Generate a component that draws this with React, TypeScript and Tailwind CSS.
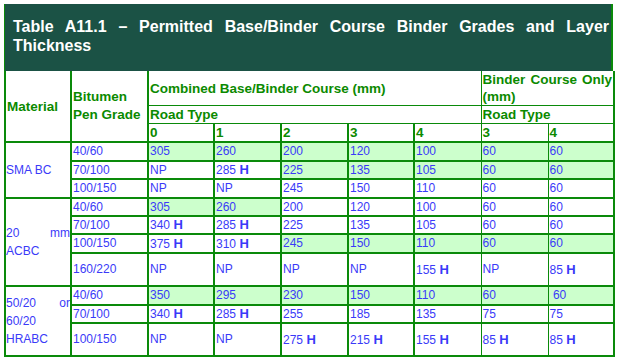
import React from 'react';

type Cell = { v: string; g?: boolean };
type Row = { grade: string; h: string; cells: Cell[]; mat?: { text: string; span: number; justify?: boolean } };

const BORDER_L: Record<number, string> = { 0: 'border-l-0', 1: 'border-l', 2: 'border-l-2' };
const BORDER_R: Record<number, string> = { 0: 'border-r-0', 1: 'border-r', 2: 'border-r-2' };
const BORDER_T: Record<number, string> = { 0: 'border-t-0', 1: 'border-t', 2: 'border-t-2' };
const BORDER_B: Record<number, string> = { 0: 'border-b-0', 1: 'border-b', 2: 'border-b-2' };

function edges(t: number, r: number, b: number, l: number) {
  return `${BORDER_T[t]} ${BORDER_R[r]} ${BORDER_B[b]} ${BORDER_L[l]} border-solid border-[#0a8a0a]`;
}

// left/right widths per column: material, bitumen, road types 0-4, binder 3-4
const colL = [2, 2, 2, 2, 2, 2, 2, 1, 1];
const colR = [2, 2, 2, 2, 2, 2, 1, 1, 2];

const mk = (vals: string[], green: number[]): Cell[] => vals.map((v, i) => ({ v, g: green.includes(i) }));
const all = [0, 1, 2, 3, 4, 5, 6];

const rows: Row[] = [
  { grade: '40/60', h: 'h-[19px]', mat: { text: 'SMA BC', span: 3 }, cells: mk(['305', '260', '200', '120', '100', '60', '60'], all) },
  { grade: '70/100', h: 'h-[18px]', cells: mk(['NP', '285 H', '225', '135', '105', '60', '60'], [2, 3, 4, 5, 6]) },
  { grade: '100/150', h: 'h-[19px]', cells: mk(['NP', 'NP', '245', '150', '110', '60', '60'], []) },
  { grade: '40/60', h: 'h-[18px]', mat: { text: '20 mm ACBC', span: 4, justify: true }, cells: mk(['305', '260', '200', '120', '100', '60', '60'], [0, 1]) },
  { grade: '70/100', h: 'h-[18px]', cells: mk(['340 H', '285 H', '225', '135', '105', '60', '60'], []) },
  { grade: '100/150', h: 'h-[19px]', cells: mk(['375 H', '310 H', '245', '150', '110', '60', '60'], [2, 3, 4, 5, 6]) },
  { grade: '160/220', h: 'h-[33px]', cells: mk(['NP', 'NP', 'NP', 'NP', '155 H', 'NP', '85 H'], []) },
  { grade: '40/60', h: 'h-[19px]', mat: { text: '50/20 or 60/20 HRABC', span: 3, justify: true }, cells: mk(['350', '295', '230', '150', '110', '60', '\u00a060'], all) },
  { grade: '70/100', h: 'h-[18px]', cells: mk(['340 H', '285 H', '255', '185', '135', '75', '75'], []) },
  { grade: '100/150', h: 'h-[33px]', cells: mk(['NP', 'NP', '275 H', '215 H', '155 H', '85 H', '85 H'], []) },
];

function Value({ v }: { v: string }) {
  if (v.endsWith(' H')) {
    return (
      <>
        {v.slice(0, -2)} <b className="text-[13px]">H</b>
      </>
    );
  }
  return <>{v}</>;
}

export default function App() {
  const head = 'text-[13.5px] font-bold text-[#0b8a00] leading-[17px] px-[1px] py-0';
  const data = 'text-[12px] text-[#3a3af8] align-middle';

  return (
    <div className="w-[620px] h-[360px] bg-white pt-[4px] pl-[4px]" style={{ fontFamily: '"Liberation Sans", Arial, sans-serif' }}>
      <div className="w-[609px]">
        <div className="bg-[#1b5245] border-r-2 border-l border-[#0a8a0a] pt-[13px] pb-[16px] pl-[8px] pr-[2px] text-white text-[16px] font-bold leading-[19px] text-justify">
          Table A11.1 – Permitted Base/Binder Course Binder Grades and Layer Thickness
        </div>
        <table className="w-[609px] table-fixed border-collapse">
          <colgroup>
            <col className="w-[66px]" />
            <col className="w-[77px]" />
            <col className="w-[66px]" />
            <col className="w-[67px]" />
            <col className="w-[67px]" />
            <col className="w-[66px]" />
            <col className="w-[67px]" />
            <col className="w-[67px]" />
            <col className="w-[66px]" />
          </colgroup>
          <thead>
            <tr className="h-[32px]">
              <th rowSpan={3} className={`${head} ${edges(0, 2, 2, 2)} align-middle text-left`}>Material</th>
              <th rowSpan={3} className={`${head} ${edges(0, 2, 2, 2)} align-middle text-left leading-[18px]`}>Bitumen Pen Grade</th>
              <th colSpan={5} className={`${head} ${edges(0, 1, 1, 2)} align-middle text-left`}>Combined Base/Binder Course (mm)</th>
              <th colSpan={2} className={`${head} ${edges(0, 2, 1, 1)} align-middle text-justify overflow-hidden`}>Binder Course Only (mm)</th>
            </tr>
            <tr className="h-[17px]">
              <th colSpan={5} className={`${head} ${edges(1, 1, 1, 2)} text-left`}>Road Type</th>
              <th colSpan={2} className={`${head} ${edges(1, 2, 1, 1)} text-left`}>Road Type</th>
            </tr>
            <tr className="h-[17px]">
              {['0', '1', '2', '3', '4', '3', '4'].map((n, i) => (
                <th key={i} className={`${head} ${edges(1, colR[i + 2], 2, colL[i + 2])} text-left`}>{n}</th>
              ))}
            </tr>
          </thead>
          <tbody>
            {rows.map((r, ri) => (
              <tr key={ri} className={r.h}>
                {r.mat && (
                  <td
                    rowSpan={r.mat.span}
                    className={`${data} ${edges(2, 2, 2, 2)} leading-[18px] p-0 ${r.mat.justify ? 'text-justify' : 'text-left'}`}
                  >
                    {r.mat.text}
                  </td>
                )}
                <td className={`${data} ${edges(2, 2, 2, 2)} text-left leading-[15px] px-[1px] py-0 whitespace-nowrap`}>{r.grade}</td>
                {r.cells.map((c, ci) => (
                  <td
                    key={ci}
                    className={`${data} ${edges(2, colR[ci + 2], 2, colL[ci + 2])} text-left leading-[15px] px-[1px] py-0 whitespace-nowrap ${c.g ? 'bg-[#ccffcc]' : ''}`}
                  >
                    <Value v={c.v} />
                  </td>
                ))}
              </tr>
            ))}
          </tbody>
        </table>
      </div>
    </div>
  );
}
